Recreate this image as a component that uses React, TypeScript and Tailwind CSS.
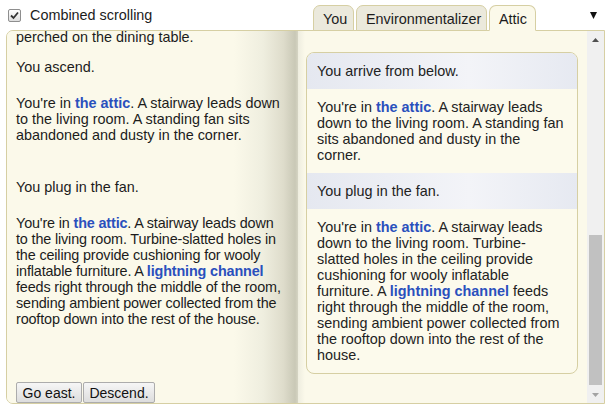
import React from 'react'

const link = 'font-bold text-[#2a50bd]'

function Tab({ label, w, active }: { label: string; w: string; active?: boolean }) {
  return (
    <div
      className={
        w +
        ' h-[26px] pl-[9px] pt-[5px] border border-[#d6cfa3] rounded-t-[7px] whitespace-nowrap ' +
        (active ? 'bg-[#fbf9ea] border-b-transparent' : 'bg-[#ebe9dc]')
      }
    >
      {label}
    </div>
  )
}

export default function App() {
  return (
    <div className="w-[611px] h-[411px] bg-white text-[14.4px] leading-[16px] text-[#1c1c1c] font-['Liberation_Sans',Arial,sans-serif] overflow-hidden">
      <div className="flex h-[30px] items-start">
        <div className="w-[313px] flex items-center pl-[8px] pt-[7px]">
          <span className="w-[13px] h-[13px] border border-[#8e8e8e] rounded-[2px] bg-[linear-gradient(#ffffff,#dedede)] flex items-center justify-center">
            <svg width="9" height="9" viewBox="0 0 9 9">
              <path d="M1 4.5 L3.5 7 L8 1.5" stroke="#333" strokeWidth="1.8" fill="none" />
            </svg>
          </span>
          <span className="ml-[9px]">Combined scrolling</span>
        </div>
        <div className="relative z-10 flex gap-[2px] self-end mb-[-1px]">
          <Tab label="You" w="w-[41px]" />
          <Tab label="Environmentalizer" w="w-[131px]" />
          <Tab label="Attic" w="w-[47px]" active />
        </div>
        <div className="ml-auto pr-[14px] pt-[12px]">
          <svg width="7" height="7" viewBox="0 0 7 7">
            <path d="M0 0 H7 L3.5 7 Z" fill="#111" />
          </svg>
        </div>
      </div>

      <div className="ml-[6px] w-[599px] h-[374px] border border-[#d6cfa3] rounded-l-[7px] bg-[#fbf9ea] flex overflow-hidden">
        {/* left page */}
        <div className="w-[291px] flex flex-col bg-[linear-gradient(to_right,#fbf9ea_0%,#fbf9ea_78%,#efeedf_88%,#dedccb_95%,#c9c8b6_99%,#d5d4c3_100%)]">
          <div className="flex-1 overflow-hidden pl-[9px] pr-[5px]">
            <p className="mt-[-2px]">perched on the dining table.</p>
            <p className="mt-[14px]">You ascend.</p>
            <p className="mt-[20px]">
              You're in <span className={link}>the attic</span>. A stairway leads down to the living room. A
              standing fan sits abandoned and dusty in the corner.
            </p>
            <p className="mt-[36px]">You plug in the fan.</p>
            <p className="mt-[20px] mr-[-5px] tracking-[-0.15px]">
              You're in <span className={link}>the attic</span>. A stairway leads down to{'\u00a0'}the living room.
              Turbine-slatted holes in the ceiling provide cushioning for wooly inflatable furniture. A{' '}
              <span className={link}>lightning channel</span> feeds right through the middle of the room, sending
              ambient power collected from the rooftop down into the rest of the house.
            </p>
          </div>
          <div className="flex gap-[1px] pl-[9px] text-[14px]">
            <button className="w-[66px] h-[21px] border border-[#acacac] rounded-[2px] bg-[linear-gradient(#f6f6f6,#dddddd)] text-[#111]">
              Go east.
            </button>
            <button className="w-[72px] h-[21px] border border-[#acacac] rounded-[2px] bg-[linear-gradient(#f6f6f6,#dddddd)] text-[#111]">
              Descend.
            </button>
          </div>
        </div>

        {/* right page */}
        <div className="flex-1 bg-[linear-gradient(to_right,#eeeddf,#fbf9ea_7px)] pl-[8px] pt-[21px]">
          <div className="w-[272px] border border-[#d6cfa3] rounded-[8px] overflow-hidden bg-[#fcfaec] text-[#222]">
            <div className="px-[10px] py-[10px] bg-[linear-gradient(to_right,#e5e8f0,#f3f4f8_60%,#e6e9f1)]">
              You arrive from below.
            </div>
            <div className="px-[10px] py-[10px]">
              You're in <span className={link}>the attic</span>. A stairway leads down to the living room. A
              standing fan sits abandoned and dusty in the corner.
            </div>
            <div className="px-[10px] py-[10px] bg-[linear-gradient(to_right,#e5e8f0,#f3f4f8_60%,#e6e9f1)]">
              You plug in the fan.
            </div>
            <div className="px-[10px] py-[10px]">
              You're in <span className={link}>the attic</span>. A stairway leads down to the living room.
              Turbine-slatted holes in the ceiling provide cushioning for wooly inflatable furniture. A{' '}
              <span className={link}>lightning channel</span> feeds right through the middle of the room, sending
              ambient power collected from the rooftop down into the rest of the house.
            </div>
          </div>
        </div>

        {/* scrollbar */}
        <div className="w-[17px] bg-[#f0f0f0] flex flex-col">
          <div className="h-[17px] flex items-center justify-center">
            <svg width="7" height="4" viewBox="0 0 7 4">
              <path d="M0 4 L3.5 0 L7 4 Z" fill="#505050" />
            </svg>
          </div>
          <div className="flex-1">
            <div className="mt-[187px] mx-[2px] h-[150px] bg-[#c1c1c1]" />
          </div>
          <div className="h-[17px] flex items-center justify-center">
            <svg width="7" height="4" viewBox="0 0 7 4">
              <path d="M0 0 L7 0 L3.5 4 Z" fill="#a3a3a3" />
            </svg>
          </div>
        </div>
      </div>
    </div>
  )
}
